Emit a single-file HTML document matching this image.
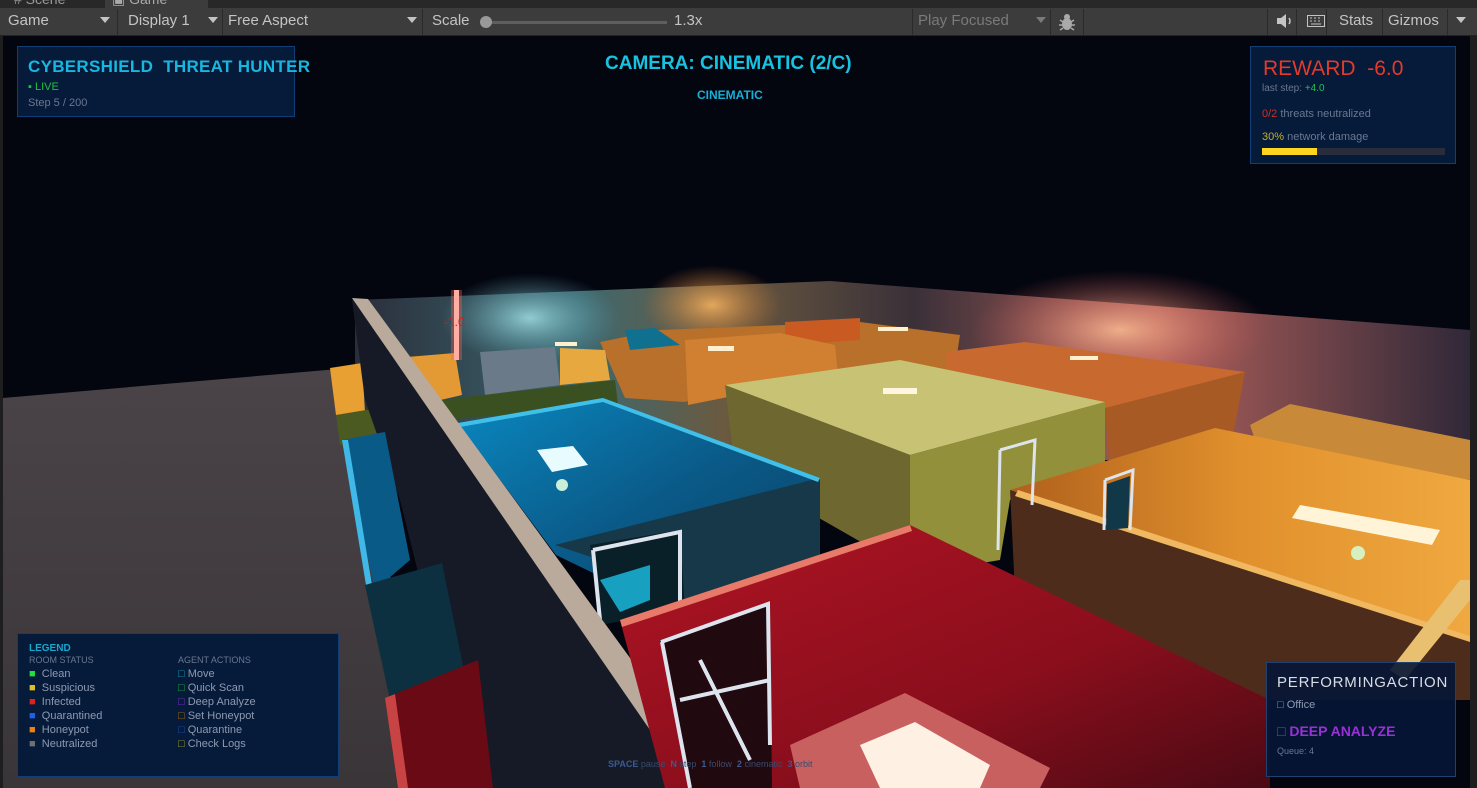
<!DOCTYPE html>
<html><head><meta charset="utf-8"><style>
*{margin:0;padding:0;box-sizing:border-box}
body{width:1477px;height:788px;overflow:hidden;background:#1e1e1e;font-family:"Liberation Sans",sans-serif;position:relative}
.tb{position:absolute;left:0;top:0;width:1477px;height:36px;background:#3c3c3c;border-bottom:1px solid #232323}
.tabs{position:absolute;left:0;top:0;width:1477px;height:8px;background:#282828;overflow:hidden}
.t{position:absolute;top:12px;font-size:15px;color:#c4c4c4;white-space:nowrap}
.ar{position:absolute;top:17px;width:0;height:0;border-left:5px solid transparent;border-right:5px solid transparent;border-top:6px solid #c4c4c4}
.sep{position:absolute;top:9px;width:1px;height:26px;background:#2a2a2a}
.game{position:absolute;left:3px;top:36px;width:1467px;height:752px;overflow:hidden;background:#03050f}
.p{position:absolute;background:#061a3a;border:1px solid #123e78}
.abs{position:absolute;white-space:nowrap}
</style></head><body>
<div class="tb"><div class="tabs">
<div style="position:absolute;left:105px;top:0;width:103px;height:8px;background:#3c3c3c"></div>
<div class="abs" style="left:14px;top:-9px;font-size:14px;color:#9a9a9a"># Scene</div>
<div class="abs" style="left:112px;top:-9px;font-size:14px;color:#aaa">▣ Game</div>
</div>
<div class="t" style="left:8px">Game</div><div class="ar" style="left:100px"></div><div class="sep" style="left:117px"></div>
<div class="t" style="left:128px">Display 1</div><div class="ar" style="left:208px"></div><div class="sep" style="left:222px"></div>
<div class="t" style="left:228px">Free Aspect</div><div class="ar" style="left:407px"></div><div class="sep" style="left:422px"></div>
<div class="t" style="left:432px">Scale</div>
<div style="position:absolute;left:486px;top:21px;width:181px;height:3px;background:#5e5e5e"></div>
<div style="position:absolute;left:480px;top:16px;width:12px;height:12px;border-radius:6px;background:#999"></div>
<div class="t" style="left:674px">1.3x</div>
<div class="sep" style="left:912px"></div>
<div class="t" style="left:918px;color:#7a7a7a">Play Focused</div><div class="ar" style="left:1036px;border-top-color:#7a7a7a"></div>
<div class="sep" style="left:1050px"></div>
<svg style="position:absolute;left:1058px;top:12px" width="18" height="20" viewBox="0 0 18 20"><ellipse cx="9" cy="12" rx="5" ry="6" fill="#aaa"/><circle cx="9" cy="5" r="3" fill="#aaa"/><path d="M2 8l3 2M16 8l-3 2M1 13h4M17 13h-4M2 18l3-2M16 18l-3-2" stroke="#aaa" stroke-width="1.5"/></svg>
<div class="sep" style="left:1083px"></div><div class="sep" style="left:1267px"></div>
<svg style="position:absolute;left:1276px;top:14px" width="18" height="14"><path d="M1 4h4l5-4v14l-5-4H1z" fill="#c4c4c4"/><path d="M13 4q2 3 0 6" stroke="#c4c4c4" fill="none" stroke-width="1.5"/></svg>
<div class="sep" style="left:1296px"></div>
<svg style="position:absolute;left:1307px;top:15px" width="18" height="12"><rect x="0.5" y="0.5" width="17" height="11" fill="none" stroke="#c4c4c4"/><path d="M3 3h2M7 3h2M11 3h2M3 6h2M7 6h2M11 6h2M4 9h10" stroke="#c4c4c4"/></svg>
<div class="sep" style="left:1326px"></div>
<div class="t" style="left:1339px">Stats</div><div class="sep" style="left:1382px"></div>
<div class="t" style="left:1388px">Gizmos</div><div class="sep" style="left:1447px"></div><div class="ar" style="left:1456px"></div>
</div>

<div class="game">
<svg width="1467" height="752" viewBox="3 36 1467 752" style="position:absolute;left:0;top:0">
<defs>
<linearGradient id="bw" x1="0" x2="1" y1="0" y2="0"><stop offset="0" stop-color="#2a2e3a"/><stop offset=".2" stop-color="#3c6870"/><stop offset=".33" stop-color="#6a5a40"/><stop offset=".5" stop-color="#3a3038"/><stop offset=".72" stop-color="#b0605a"/><stop offset="1" stop-color="#302838"/></linearGradient>
<radialGradient id="g1" cx=".5" cy=".5" r=".5"><stop offset="0" stop-color="#a8e8ec" stop-opacity=".8"/><stop offset="1" stop-color="#5aa0b0" stop-opacity="0"/></radialGradient>
<radialGradient id="g2" cx=".5" cy=".5" r=".5"><stop offset="0" stop-color="#f0b060" stop-opacity=".9"/><stop offset="1" stop-color="#c07030" stop-opacity="0"/></radialGradient>
<radialGradient id="g3" cx=".5" cy=".5" r=".5"><stop offset="0" stop-color="#f8b890" stop-opacity=".9"/><stop offset="1" stop-color="#c05050" stop-opacity="0"/></radialGradient>
<linearGradient id="gr" x1="0" x2="0" y1="0" y2="1"><stop offset="0" stop-color="#4a4448"/><stop offset="1" stop-color="#3a3538"/></linearGradient>
<linearGradient id="red" x1="0" x2="1" y1="0" y2="1"><stop offset="0" stop-color="#b01424"/><stop offset=".6" stop-color="#8a0e1c"/><stop offset="1" stop-color="#4a0a14"/></linearGradient>
<linearGradient id="blu" x1="0" x2="1" y1="0" y2="1"><stop offset="0" stop-color="#0a88c0"/><stop offset=".5" stop-color="#0a5a88"/><stop offset="1" stop-color="#0a3e60"/></linearGradient>
<linearGradient id="org" x1="0" x2="1" y1="0" y2="0"><stop offset="0" stop-color="#b0601c"/><stop offset=".5" stop-color="#e0902c"/><stop offset="1" stop-color="#f0a840"/></linearGradient>
</defs>
<polygon points="3,398 350,368 380,500 420,788 3,788" fill="url(#gr)"/>
<polygon points="355,300 830,281 1470,330 1470,460 355,460" fill="url(#bw)"/>
<ellipse cx="530" cy="318" rx="90" ry="45" fill="url(#g1)"/>
<ellipse cx="712" cy="305" rx="70" ry="40" fill="url(#g2)"/>
<ellipse cx="1120" cy="330" rx="150" ry="60" fill="url(#g3)"/>
<polygon points="600,342 660,330 860,322 960,335 950,400 725,388 685,402 625,398" fill="#b8702a"/>
<polygon points="785,322 860,318 860,340 785,345" fill="#c85a22"/>
<polygon points="625,330 655,328 680,345 630,350" fill="#107090"/>
<polygon points="685,340 780,333 835,345 838,375 688,405" fill="#d08030"/>
<polygon points="945,352 1025,342 1245,372 1225,432 1105,408 950,400" fill="#c86a30"/>
<polygon points="1105,408 1245,372 1232,440 1110,470" fill="#a85a24"/>
<polygon points="1250,425 1290,404 1470,440 1470,480 1255,440" fill="#c88a38"/>
<polygon points="725,385 900,360 1105,402 910,455" fill="#c8c274"/>
<polygon points="725,385 910,455 910,570 735,470" fill="#6e6830"/>
<polygon points="910,455 1105,402 1105,480 1010,500 1000,560 910,575" fill="#92903a"/>
<rect x="883" y="388" width="34" height="6" fill="#fff6e0"/>
<polygon points="1010,490 1215,428 1470,480 1470,640 1190,548 1015,495" fill="url(#org)"/>
<polygon points="1010,490 1470,640 1470,700 1270,700 1015,592" fill="#4e2c1c"/>
<polygon points="1300,505 1440,530 1432,545 1292,518" fill="#fff4d8"/>
<circle cx="1358" cy="553" r="7" fill="#d8f0c0"/>
<polygon points="1018,490 1470,636 1470,642 1015,496" fill="#f0b860"/>
<polygon points="1390,670 1460,580 1470,580 1470,600 1405,680" fill="#e8c070"/>
<polygon points="330,368 362,363 365,412 336,415" fill="#e8a032"/>
<polygon points="336,415 378,408 380,440 340,445" fill="#4a5a20"/>
<polygon points="395,358 455,353 462,395 432,402 400,398" fill="#e49a34"/>
<polygon points="480,352 555,347 560,385 485,395" fill="#6a7a88"/>
<polygon points="560,348 605,350 610,380 560,385" fill="#e8a840"/>
<polygon points="440,400 615,380 618,405 445,420" fill="#3a5020"/>
<polygon points="458,423 603,398 820,478 820,590 690,620 556,555" fill="url(#blu)"/>
<polygon points="555,545 820,478 820,590 640,640 600,560" fill="#163848"/>
<polygon points="458,423 603,398 820,478 818,482 603,402 460,427" fill="#40c0e8"/>
<polygon points="537,450 573,446 588,465 552,472" fill="#e8fcff"/>
<circle cx="562" cy="485" r="6" fill="#c8f0d8"/>
<polygon points="590,545 680,530 685,610 600,625" fill="#0a2028"/>
<path d="M593 550 L680 532 L680 605 M593 550 L600 620" stroke="#dde4ee" stroke-width="4" fill="none"/>
<polygon points="600,580 650,565 650,600 620,612" fill="#18a0c0"/>
<!-- long wall -->
<polygon points="352,300 367,301 695,788 490,788 450,700 400,500 365,400" fill="#161a26"/>
<polygon points="352,298 368,299 725,788 690,788" fill="#b9aa9c"/>
<!-- left blue rooms -->
<polygon points="342,440 385,432 410,560 375,590" fill="#0a5a88"/>
<polygon points="342,440 348,440 372,585 366,585" fill="#40b8e8"/>
<polygon points="365,585 442,563 470,700 390,700" fill="#0c3040"/>
<polygon points="385,698 478,660 493,788 398,788" fill="#6a0a14"/>
<polygon points="385,698 395,694 408,788 398,788" fill="#c84444"/>
<!-- red room -->
<polygon points="620,620 910,525 1270,700 1270,788 665,788" fill="url(#red)"/>
<polygon points="620,620 910,525 912,531 622,627" fill="#e87a6a"/>
<polygon points="660,640 770,602 772,788 690,788" fill="#200a10"/>
<path d="M661 642 L768 604 L770 745 M662 642 L690 788 M680 700 L770 680 M700 660 L750 760" stroke="#dde4ee" stroke-width="4" fill="none"/>
<polygon points="790,745 905,693 1050,768 1040,788 800,788" fill="#c86060"/>
<polygon points="860,745 915,722 990,765 980,788 880,788" fill="#fff0e4"/>
<path d="M1000 450 L1035 440 L1032 505 M1000 450 L998 550" stroke="#dde4ee" stroke-width="3" fill="none"/>
<path d="M1105 480 L1133 470 L1130 530 M1105 480 L1104 530" stroke="#dde4ee" stroke-width="3" fill="none"/>
<polygon points="1107,484 1130,476 1128,528 1106,530" fill="#103848"/>
<rect x="454" y="290" width="5" height="70" fill="#ffd8d0"/>
<rect x="451" y="290" width="11" height="70" fill="#ff6050" opacity=".35"/>
<text x="444" y="326" fill="#d02020" font-size="12" font-family="Liberation Sans">-1.0</text>
<rect x="555" y="342" width="22" height="4" fill="#fff0d0"/>
<rect x="878" y="327" width="30" height="4" fill="#fff0d0"/>
<rect x="1070" y="356" width="28" height="4" fill="#fff0d0"/>
<rect x="708" y="346" width="26" height="5" fill="#fff0d0"/>
</svg>
</div>

<div class="p" style="left:17px;top:46px;width:278px;height:71px">
<div class="abs" style="left:10px;top:10px;color:#17b8e0;font-weight:bold;font-size:17px;letter-spacing:.3px">CYBERSHIELD&nbsp; THREAT HUNTER</div>
<div class="abs" style="left:10px;top:34px;color:#20c040;font-size:11px">▪ LIVE</div>
<div class="abs" style="left:10px;top:50px;color:#6a7890;font-size:11px">Step 5 / 200</div>
</div>
<div class="abs" style="left:605px;top:53px;color:#17c3e0;font-weight:bold;font-size:19px">CAMERA: CINEMATIC (2/C)</div>
<div class="abs" style="left:697px;top:88px;color:#17b0d8;font-size:12px;font-weight:bold">CINEMATIC</div>

<div class="p" style="left:1250px;top:46px;width:206px;height:118px">
<div class="abs" style="left:12px;top:10px;color:#e43a2a;font-size:21px">REWARD&nbsp; -6.0</div>
<div class="abs" style="left:11px;top:36px;color:#6a7890;font-size:10px">last step: <span style="color:#20c050">+4.0</span></div>
<div class="abs" style="left:11px;top:61px;color:#6a7890;font-size:11px"><span style="color:#d03020">0/2</span> threats neutralized</div>
<div class="abs" style="left:11px;top:84px;color:#6a7890;font-size:11px"><span style="color:#c8b020">30%</span> network damage</div>
<div class="abs" style="left:11px;top:101px;width:183px;height:7px;background:#282c3c"><div style="width:55px;height:7px;background:#ffd520"></div></div>
</div>

<div class="p" style="left:17px;top:633px;width:322px;height:144px;font-size:11px;color:#8e9ab0">
<div class="abs" style="left:11px;top:9px;color:#17a8d0;font-weight:bold;font-size:10px">LEGEND</div>
<div class="abs" style="left:11px;top:21px;font-size:9px;color:#6a7890">ROOM STATUS</div>
<div class="abs" style="left:160px;top:21px;font-size:9px;color:#6a7890">AGENT ACTIONS</div>
<div class="abs" style="left:11px;top:33px;line-height:14px"><span style="color:#20e040">■</span>&nbsp; Clean<br><span style="color:#e0c020">■</span>&nbsp; Suspicious<br><span style="color:#e02020">■</span>&nbsp; Infected<br><span style="color:#2060e8">■</span>&nbsp; Quarantined<br><span style="color:#f08010">■</span>&nbsp; Honeypot<br><span style="color:#707070">■</span>&nbsp; Neutralized</div>
<div class="abs" style="left:160px;top:33px;line-height:14px"><span style="color:#10a0b0">□</span> Move<br><span style="color:#20b040">□</span> Quick Scan<br><span style="color:#8030d0">□</span> Deep Analyze<br><span style="color:#b07010">□</span> Set Honeypot<br><span style="color:#2050b0">□</span> Quarantine<br><span style="color:#a0a030">□</span> Check Logs</div>
</div>

<div class="p" style="left:1266px;top:662px;width:190px;height:115px;background:rgba(6,22,54,.9);border-color:#22406e">
<div class="abs" style="left:10px;top:11px;color:#d8dce6;font-size:15px;letter-spacing:.8px">PERFORMINGACTION</div>
<div class="abs" style="left:10px;top:36px;color:#8e9ab0;font-size:11px">□ Office</div>
<div class="abs" style="left:10px;top:60px;color:#9a30d8;font-size:14px;font-weight:bold">□ DEEP ANALYZE</div>
<div class="abs" style="left:10px;top:83px;color:#6a7890;font-size:9px">Queue: 4</div>
</div>

<div class="abs" style="left:608px;top:759px;font-size:9px;color:#3a4a6a"><b style="color:#3a5a90">SPACE</b> pause&nbsp; <b style="color:#3a5a90">N</b> step&nbsp; <b style="color:#3a5a90">1</b> follow&nbsp; <b style="color:#3a5a90">2</b> cinematic&nbsp; <b style="color:#3a5a90">3</b> orbit</div>
</body></html>
